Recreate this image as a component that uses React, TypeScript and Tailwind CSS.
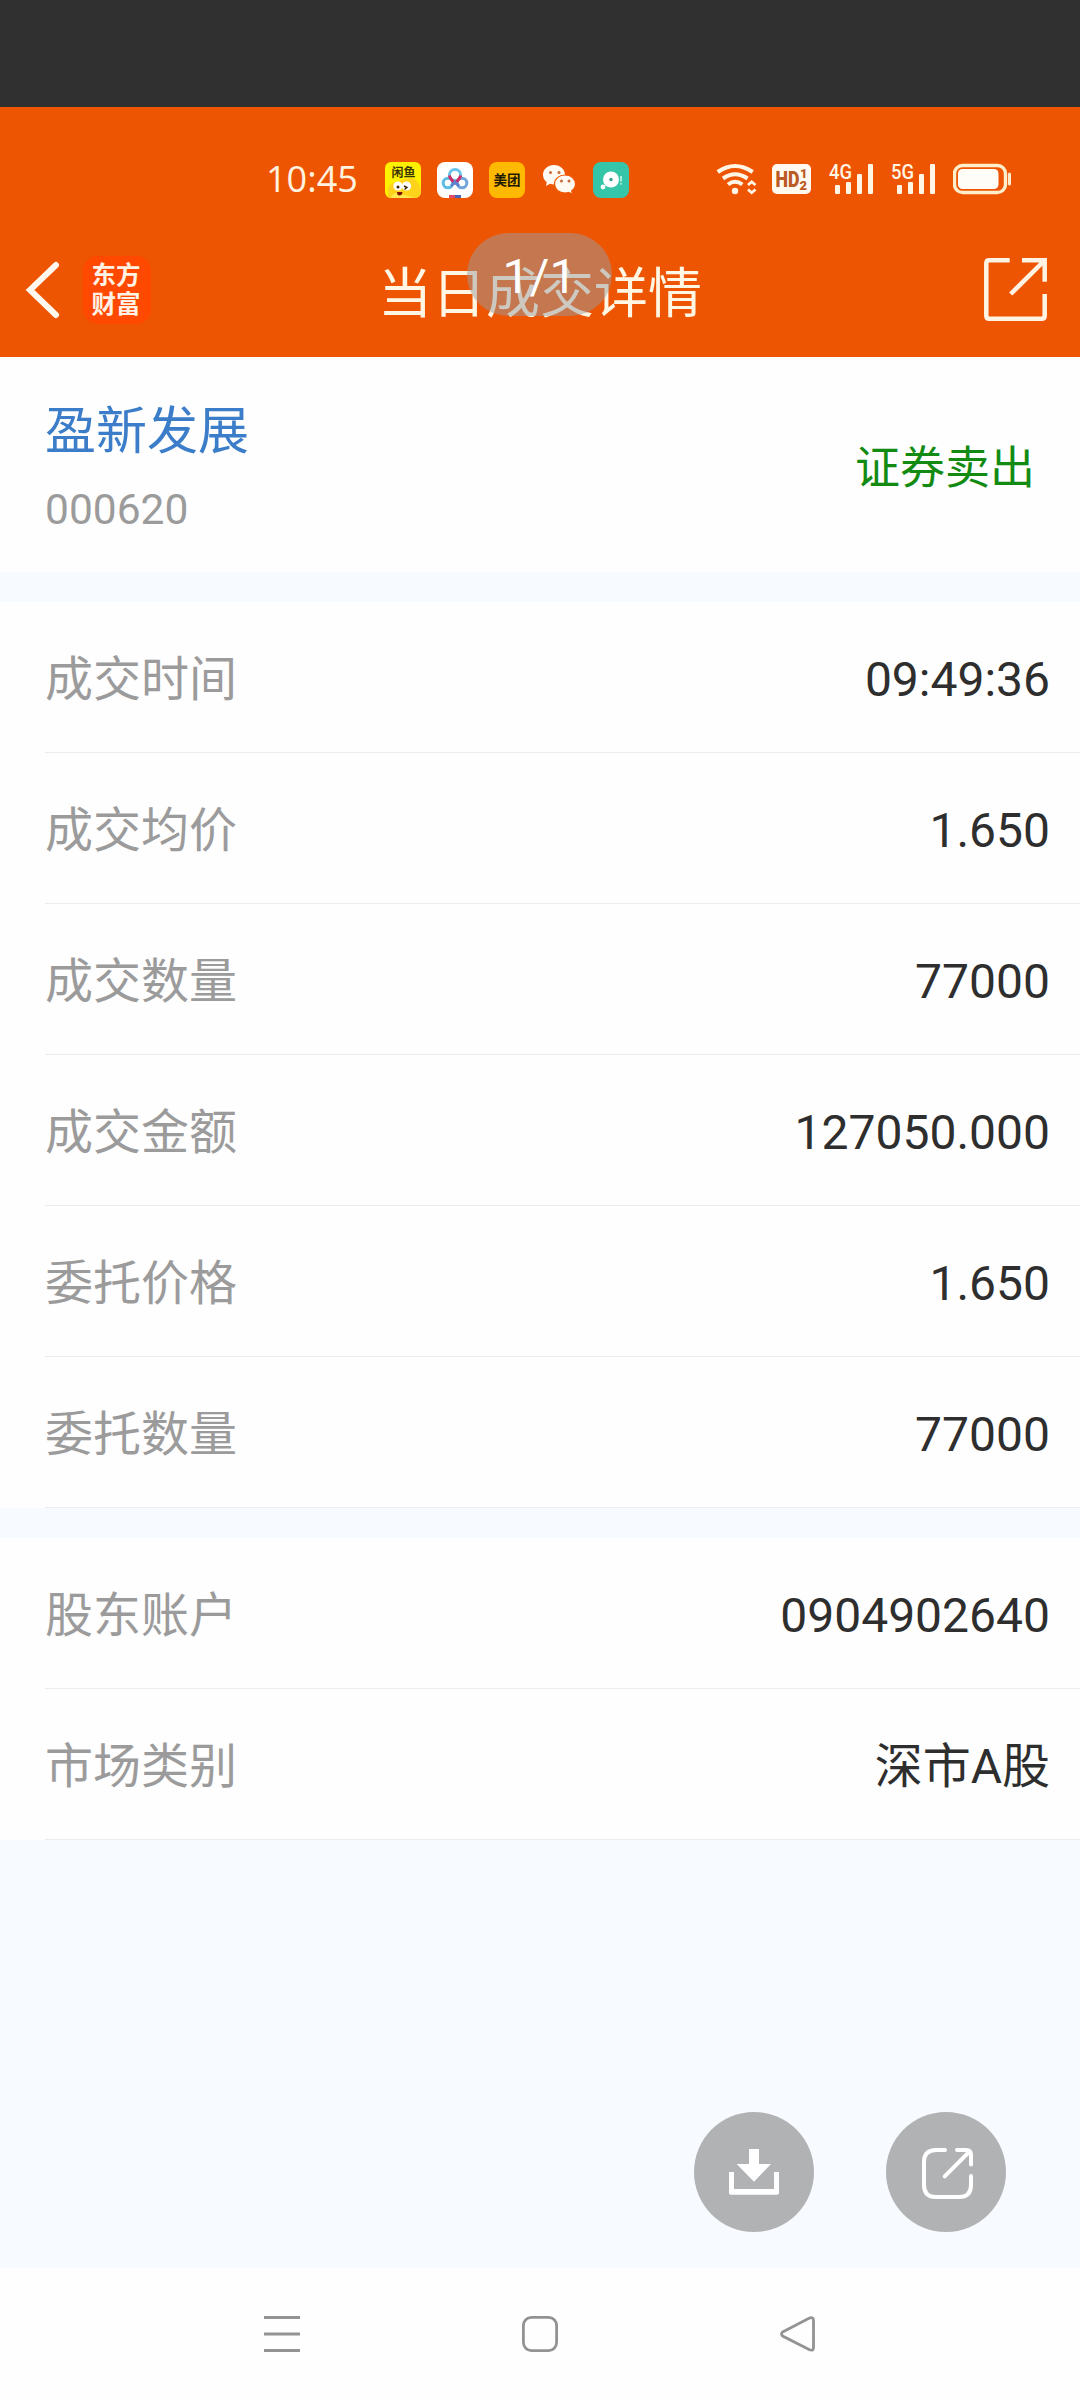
import React from 'react';

interface DetailItem {
  label: string;
  value: string;
}

const tradeDetails: DetailItem[] = [
  { label: '成交时间', value: '09:49:36' },
  { label: '成交均价', value: '1.650' },
  { label: '成交数量', value: '77000' },
  { label: '成交金额', value: '127050.000' },
  { label: '委托价格', value: '1.650' },
  { label: '委托数量', value: '77000' },
];

const accountDetails: DetailItem[] = [
  { label: '股东账户', value: '0904902640' },
  { label: '市场类别', value: '深市A股' },
];

function DetailList({ items }: { items: DetailItem[] }) {
  return (
    <div className="bg-[#fefefe] pl-[45px]">
      {items.map(item => (
        <div
          key={item.label}
          className="flex h-[151px] items-center justify-between border-b border-[#ececed] pr-[30px] pt-[5px] text-[48px] leading-[70px]"
        >
          <span className="text-[#9c9b9c]">{item.label}</span>
          <span className="text-[#2e2e2e]">{item.value}</span>
        </div>
      ))}
    </div>
  );
}

function SignalIcon({ label }: { label: string }) {
  return (
    <svg width="46" height="36" viewBox="0 0 46 36" fill="#fff6e6">
      <text x="0" y="16.5" fontSize="20" fontWeight="500" textLength="23" lengthAdjust="spacingAndGlyphs">
        {label}
      </text>
      <rect x="6" y="23" width="5" height="9" rx="1" />
      <rect x="17" y="20" width="5" height="12" rx="1" />
      <rect x="28" y="12" width="5" height="20" rx="1" />
      <rect x="39" y="2" width="5" height="30" rx="1" />
    </svg>
  );
}

function StatusBar() {
  return (
    <div className="flex h-[115px] items-start pt-[55px]">
      <span className="ml-[266px] w-[119px] font-['Open_Sans'] text-[36px] leading-[34px] text-[#fff3e0]">10:45</span>

      <div className="flex gap-4">
        <svg width="36" height="36" viewBox="0 0 36 36">
          <clipPath id="fish">
            <rect width="36" height="36" rx="6" />
          </clipPath>
          <g clipPath="url(#fish)">
            <rect width="36" height="36" fill="#fdf000" />
            <path d="M3 36V27Q5 20 13 20Q20 16 27 16Q34 18 36 28V36Z" fill="#ffd21c" />
            <path d="M6 36Q8 29 16 32Q24 34 29 36Z" fill="#ffe94a" />
            <text x="6.5" y="14.5" fontSize="12" fontWeight="700" fill="#3b3500">闲鱼</text>
            <circle cx="13" cy="24" r="4.6" fill="#fff" />
            <circle cx="21.5" cy="24" r="4.6" fill="#fff" />
            <circle cx="13" cy="25" r="1.5" fill="#3b2500" />
            <path d="M19 24l3 1.5-2.5 2" stroke="#3b2500" strokeWidth="1.4" fill="none" />
            <path d="M12 30h5.5q-.5 3.5-3 3.5t-2.5-3.5z" fill="#7a1008" />
          </g>
        </svg>
        <svg width="36" height="36" viewBox="0 0 36 36" fill="none">
          <rect width="36" height="36" rx="8" fill="#fff" />
          <circle cx="11" cy="21" r="4.8" stroke="#5bbce4" strokeWidth="3" />
          <circle cx="25" cy="21" r="4.8" stroke="#6fa6dc" strokeWidth="3" />
          <circle cx="18" cy="13" r="5.6" stroke="#68c2ea" strokeWidth="3" />
          <path d="M12.4 13.5Q13 17 18 21Q23 17 23.6 13.5" stroke="#d02c68" strokeWidth="3" />
          <path d="M14 24L18 20L22 24" stroke="#5b83cf" strokeWidth="3" />
          <path d="M12 34.5h7" stroke="#df4b62" strokeWidth="3" />
          <path d="M18 34.5h6" stroke="#4a62b8" strokeWidth="3" />
        </svg>
        <svg width="36" height="36" viewBox="0 0 36 36">
          <rect width="36" height="36" rx="8" fill="#ffb900" />
          <text x="4.5" y="23" fontSize="13.5" fontWeight="700" fill="#1f1a00">美团</text>
        </svg>
        <svg width="36" height="36" viewBox="0 0 36 36">
          <path d="M13 3C6.500 3 2 7.500 2 12.800c0 3 1.400 5.700 3.800 7.400L5 24l4-2.200c1.300.4 2.600.6 4 .6 6.200 0 11-4.300 11-9.600S19.400 3 13 3z" fill="#fffaf2" />
          <path d="M24 13c-6 0-10.500 4-10.500 9s4.500 9 10.500 9c1.200 0 2.400-.2 3.500-.5L31.500 32l-.8-3.200c2.500-1.600 3.800-4 3.800-6.800 0-5-4.500-9-10.500-9z" fill="#fffaf2" stroke="#ee5502" strokeWidth="1.2" />
          <circle cx="9.500" cy="10.500" r="1.500" fill="#c66c3a" />
          <circle cx="18" cy="10.500" r="1.500" fill="#c66c3a" />
          <circle cx="20.500" cy="19" r="1.500" fill="#c66c3a" />
          <circle cx="28" cy="19" r="1.500" fill="#c66c3a" />
        </svg>
        <svg width="36" height="36" viewBox="0 0 36 36">
          <rect width="36" height="36" rx="8" fill="#35c6aa" />
          <circle cx="18" cy="17.500" r="8" fill="#fff" />
          <circle cx="18" cy="17.500" r="1.700" fill="#35a08c" />
          <circle cx="10" cy="25" r="2.400" fill="#fff" />
          <path d="M28 14v5.500M28 21v1.500" stroke="#c6f4e8" strokeWidth="1.600" />
        </svg>
      </div>

      <svg className="ml-[86px]" width="43" height="36" viewBox="0 0 43 36" fill="none" stroke="#fff6e6" strokeWidth="4">
        <path d="M2.700 10Q20 -2 37.700 10" />
        <path d="M8 16.500Q20 8 32.500 16.500" />
        <path d="M13 22.500Q20 17 27.300 22.500" />
        <circle cx="20" cy="29" r="3.200" fill="#fff6e6" stroke="none" />
        <path d="M33 23L36.700 19.800L40.500 23M33 27.500L36.700 30.700L40.500 27.500" strokeWidth="2.800" />
      </svg>
      <svg className="ml-[14px]" width="39" height="36" viewBox="0 0 39 36">
        <rect x="0" y="2" width="39" height="30" rx="5" fill="#fff9f0" />
        <g fill="#bb5a24" fontWeight="900">
          <text x="3.500" y="25" fontSize="22" textLength="24" lengthAdjust="spacingAndGlyphs">HD</text>
          <text x="28" y="16" fontSize="13">1</text>
          <text x="27.500" y="27.500" fontSize="13">2</text>
        </g>
      </svg>
      <div className="ml-[18px] flex gap-4">
        <SignalIcon label="4G" />
        <SignalIcon label="5G" />
      </div>
      <svg className="ml-4" width="60" height="36" viewBox="0 0 60 36" fill="none">
        <rect x="1.500" y="3.500" width="51" height="27" rx="8" stroke="#ffeecb" strokeWidth="3.400" />
        <rect x="5" y="7" width="40.500" height="20" rx="4.500" fill="#fffdf8" />
        <path d="M56.500 12v10" stroke="#ffeecb" strokeWidth="3" strokeLinecap="round" />
      </svg>
    </div>
  );
}

function TitleBar() {
  return (
    <div className="relative flex h-[135px] items-center justify-between pl-[25px] pr-[33px]">
      <div className="flex items-center gap-[22px]">
        <svg width="36" height="58" viewBox="0 0 36 58" fill="none" stroke="#fff8ee" strokeWidth="6" strokeLinecap="round">
          <path d="M31 4L5 29L31 54" />
        </svg>
        <div className="flex h-[68px] w-[68px] flex-col items-center justify-center rounded-[15px] bg-[#ff4800] pr-0.5 text-[24.500px] font-bold leading-[29px] text-[#fff1e4]">
          <span>东方</span>
          <span>财富</span>
        </div>
      </div>
      <svg width="63" height="63" viewBox="0 0 63 63" fill="none" stroke="#fff4e3" strokeWidth="4.500">
        <path d="M25.700 2.300H5.300Q2.300 2.300 2.300 5.300V57.700Q2.300 60.700 5.300 60.700H57.700Q60.700 60.700 60.700 57.700V36" />
        <path d="M38 2.300H60.700V23.700M26.700 36L60 3" />
      </svg>

      <h1 className="absolute inset-x-0 top-[34px] text-center text-[54px] leading-[78px] text-[#fff6e4]">当日成交详情</h1>
      {/* page counter floats over the title */}
      <div className="absolute left-[467px] top-[11px] flex h-[83px] w-[145px] items-center justify-center rounded-full bg-[#9c9c9c]/50 pt-1 text-[48px] text-white">
        1/1
      </div>
    </div>
  );
}

export default function App() {
  return (
    <div className="flex h-[2400px] w-[1080px] flex-col overflow-hidden bg-[#f7faff] font-[Roboto,'Noto_Sans_CJK_SC',sans-serif]">
      <div className="h-[107px] bg-[#303030]" />
      <header className="bg-[#ee5502]">
        <StatusBar />
        <TitleBar />
      </header>

      <div className="mb-[30px] flex h-[215px] items-center justify-between bg-[#fefefe] px-[45px] pt-2">
        <div className="pt-1">
          <div className="text-[51px] leading-[76px] text-[#3b7dc8]">盈新发展</div>
          <div className="mt-0.5 text-[42.500px] leading-[76px] text-[#9c9b9c]">000620</div>
        </div>
        <div className="text-[45px] text-[#138b13]">证券卖出</div>
      </div>

      <DetailList items={tradeDetails} />
      <div className="h-[30px]" />
      <DetailList items={accountDetails} />

      <div className="mt-auto flex justify-end gap-[72px] pb-9 pr-[74px]">
        <button className="h-[120px] w-[120px] rounded-full bg-[#b1b2b4]">
          <svg width="120" height="120" viewBox="0 0 120 120" fill="white">
            <path d="M55 37H65V52H77L60 69.700L42.700 52H55Z" />
            <path d="M35 60H40V77H80V60H85V81Q85 82.700 83 82.700H37Q35 82.700 35 81Z" />
          </svg>
        </button>
        <button className="h-[120px] w-[120px] rounded-full bg-[#b1b2b4]">
          <svg width="120" height="120" viewBox="0 0 120 120" fill="none" stroke="white" strokeWidth="4" strokeLinecap="round">
            <path d="M59 38H50Q38 38 38 50V73Q38 85 50 85H73Q85 85 85 73V64" />
            <path d="M71 38H80Q85 38 85 43V52.500M58.700 64.300L83.500 39.500" />
          </svg>
        </button>
      </div>

      <nav className="flex h-[132px] items-center justify-center gap-[222px] bg-[#fefefe]">
        <svg width="36" height="36" viewBox="0 0 36 36" stroke="#939393" strokeWidth="3">
          <path d="M0 1.500H36M0 18H36M0 34.500H36" />
        </svg>
        <svg width="36" height="36" viewBox="0 0 36 36" fill="none" stroke="#939393" strokeWidth="2.800">
          <rect x="1.400" y="1.400" width="33.200" height="33.200" rx="8" />
        </svg>
        <svg width="36" height="36" viewBox="0 0 36 36" fill="none" stroke="#939393" strokeWidth="2.800">
          <path d="M2.600 16L29.500 2Q33.500 0.800 33.500 4.500V31.500Q33.500 35.200 29.500 33.800L2.600 20Q0.500 18 2.600 16Z" />
        </svg>
      </nav>
    </div>
  );
}
